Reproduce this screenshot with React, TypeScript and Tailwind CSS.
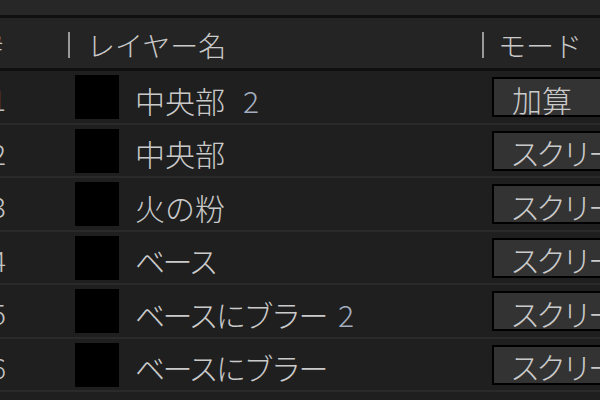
const layers = [
  { id: 1, name: "中央部", suffix: "2", mode: "加算", kana: false },
  { id: 2, name: "中央部", suffix: "", mode: "スクリーン", kana: false },
  { id: 3, name: "火の粉", suffix: "", mode: "スクリーン", kana: false },
  { id: 4, name: "ベース", suffix: "", mode: "スクリーン", kana: true },
  { id: 5, name: "ベースにブラー", suffix: "2", mode: "スクリーン", kana: true },
  { id: 6, name: "ベースにブラー", suffix: "", mode: "スクリーン", kana: true },
];

function LayerRow({ id, name, suffix, mode, kana }: (typeof layers)[number]) {
  return (
    <div className="flex h-[53.5px] items-start border-b-2 border-[#2a2a2a] bg-[#1f1f1f]">
      <div className="-ml-[9px] flex h-[52px] w-[68px] shrink-0 items-center pt-[4px] text-[28px] text-[#c4c4c4]">
        {id}
      </div>
      <div className="mt-[4px] ml-[16px] h-[44px] w-[44px] shrink-0 bg-black" />
      <div className="flex h-[52px] w-[373px] shrink-0 items-center pt-[5px] pl-[16px] text-[30px] text-[#cacaca]">
        <span className={kana ? "tracking-[-2.5px]" : ""}>{name}</span>
        {suffix && (
          <span className={kana ? "ml-[12px] text-[#a4aec0]" : "ml-[18px] text-[#a4aec0]"}>{suffix}</span>
        )}
      </div>
      <div
        className={
          mode === "加算"
            ? "mt-[6px] flex h-[40px] w-[140px] shrink-0 items-center border-2 border-black bg-[#333333] pt-[3px] pl-[18px] text-[30px] text-[#cacaca] whitespace-nowrap"
            : "mt-[6px] flex h-[40px] w-[140px] shrink-0 items-center border-2 border-black bg-[#333333] pt-[3px] pl-[16px] text-[30px] tracking-[-4px] text-[#cacaca] whitespace-nowrap"
        }
      >
        {mode}
      </div>
    </div>
  );
}

export default function App() {
  return (
    <div
      className="h-[400px] w-[600px] overflow-hidden bg-[#1f1f1f] font-light leading-none [font-feature-settings:'pwid']"
      style={{ fontFamily: '"Noto Sans CJK JP", "Noto Sans", sans-serif' }}
    >
      <div className="h-[15px] bg-[#272727]" />
      <div className="h-[3px] bg-[#101010]" />
      <div className="flex h-[50px] items-center bg-[#242424] pt-[3px] text-[28px] text-[#cacaca]">
        <div className="-ml-[12px] w-[80px] shrink-0">#</div>
        <div className="h-[26px] w-[2px] shrink-0 bg-[#9a9a9a]" />
        <div className="w-[412px] shrink-0 pl-[17px]">レイヤー名</div>
        <div className="h-[26px] w-[2px] shrink-0 bg-[#9a9a9a]" />
        <div className="w-[118px] shrink-0 pl-[14px]">モード</div>
      </div>
      <div className="h-[3px] bg-[#101010]" />
      {layers.map((l) => (
        <LayerRow key={l.id} {...l} />
      ))}
    </div>
  );
}
